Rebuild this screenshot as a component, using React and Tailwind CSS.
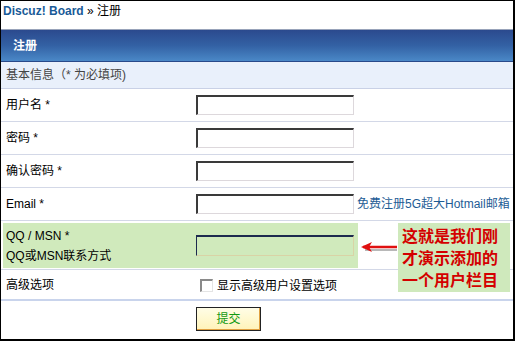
import React from 'react';

const font = { fontFamily: '"Liberation Sans", "Noto Sans CJK SC", sans-serif' };

function TextInput({ qq }) {
  return qq ? (
    <div className="w-[158px] h-[21px] border-t-2 border-l border-t-[#1c2a4e] border-l-[#1c2a4e] border-r border-b border-r-[#d9d3a6] border-b-[#d9d3a6]" />
  ) : (
    <div className="w-[158px] h-[20px] bg-white border-t-2 border-l-2 border-t-[#3a3a3a] border-l-[#3a3a3a] border-r border-b border-r-[#ddd8dc] border-b-[#ddd8dc]" />
  );
}

function Row({ label, children }) {
  return (
    <div className="flex items-center h-[33px] border-b border-[#d3d8e7]">
      <div className="w-[195px] pl-[5px] text-[12px] text-black">{label}</div>
      {children}
    </div>
  );
}

export default function App() {
  return (
    <div className="relative w-[515px] h-[341px] bg-white border-t border-l border-r-2 border-b-2 border-black overflow-hidden" style={font}>
      <div className="h-[28px] pl-[2px] pt-[3px] text-[12px] leading-[14px]">
        <span className="font-bold text-[#195a97]">Discuz! Board</span>
        <span className="text-black"> » 注册</span>
      </div>

      <div className="h-[33px] border-t border-[#98a3ba] border-b border-b-[#28498a] bg-gradient-to-b from-[#2b4a8e] via-[#3361a4] to-[#4a88c7] flex items-center pl-[12px]">
        <span className="text-white font-bold text-[12px]">注册</span>
      </div>

      <div className="h-[27px] bg-[#e9f0fb] border-b border-[#c9d1e6] flex items-center pl-[5px] text-[12px] text-[#444]">
        基本信息（* 为必填项)
      </div>

      <Row label="用户名 *"><TextInput /></Row>
      <Row label="密码 *"><TextInput /></Row>
      <Row label="确认密码 *"><TextInput /></Row>
      <Row label="Email *">
        <TextInput />
        <a className="ml-[3px] text-[12px] text-[#1d5c95] whitespace-nowrap">免费注册5G超大Hotmail邮箱</a>
      </Row>

      <div className="h-[49px] border-b border-[#d3d8e7] pt-[2px] pl-[2px]">
        <div className="w-[355px] h-[45px] bg-[#d0eabc] flex items-center">
          <div className="w-[193px] pl-[3px] text-[12px] leading-[20px] text-black">
            <div>QQ / MSN *</div>
            <div>QQ或MSN联系方式</div>
          </div>
          <TextInput qq />
        </div>
      </div>

      <div className="h-[31px] border-b-2 border-[#c9d4ec] flex items-center">
        <div className="w-[195px] pl-[5px] text-[12px] text-black">高级选项</div>
        <div className="flex items-center pl-[4px] pt-[2px]">
          <span className="w-[13px] h-[13px] bg-white border-t-2 border-l-2 border-t-[#8a8a8a] border-l-[#8a8a8a] border-r border-b border-r-[#e4e4e4] border-b-[#e4e4e4]" />
          <span className="ml-[4px] text-[12px] text-black">显示高级用户设置选项</span>
        </div>
      </div>

      <div className="h-[34px] flex items-center pl-[195px] pt-[1px]">
        <button className="w-[65px] h-[24px] bg-gradient-to-b from-[#fffde6] to-[#fff3b8] border border-[#222] shadow-[inset_-1px_-1px_0_#e0a040] text-[12px] text-[#119911]">
          提交
        </button>
      </div>

      <svg className="absolute left-[358px] top-[238px]" width="40" height="16" viewBox="0 0 40 16">
        <path d="M6 11 L38 11" stroke="#b8b8b8" strokeWidth="2" />
        <path d="M4 8 L38 8" stroke="#e01010" strokeWidth="2.5" />
        <path d="M2 8 L13 3 L10 8 L13 13 Z" fill="#e01010" />
      </svg>

      <div className="absolute left-[397px] top-[222px] w-[112px] h-[69px] bg-[#cfe9bc] pl-[4px] pt-[1px] text-[16px] leading-[22px] font-bold text-[#d40000]" style={{ fontFamily: '"Noto Sans CJK SC", sans-serif' }}>
        <div>这就是我们刚</div>
        <div>才演示添加的</div>
        <div>一个用户栏目</div>
      </div>
    </div>
  );
}
